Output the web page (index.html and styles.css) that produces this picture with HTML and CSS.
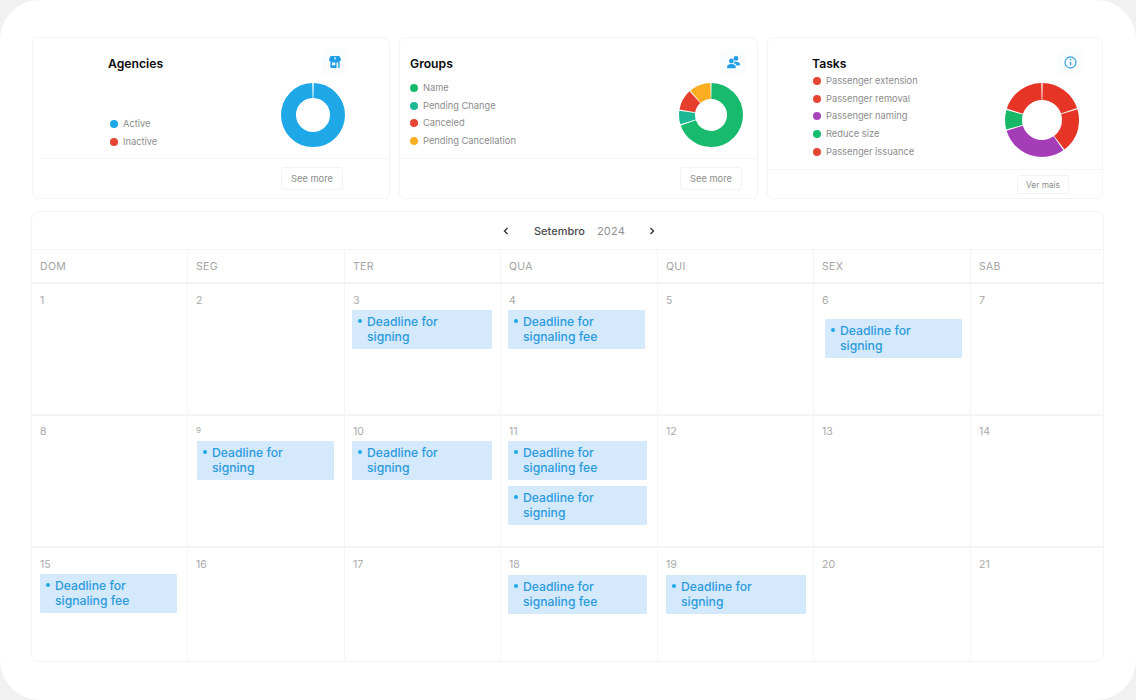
FILE: index.html
```html
<!DOCTYPE html>
<html lang="pt">
<head>
<meta charset="utf-8">
<title>Dashboard</title>
<link rel="stylesheet" href="styles.css">
</head>
<body>
<main class="panel">
  <section class="cards">
    <article class="card card-agencies">
      <div class="card-main">
        <div class="info">
          <h2 class="title">Agencies</h2>
          <ul class="legend">
            <li class="legend-item"><span class="dot blue"></span>Active</li>
            <li class="legend-item"><span class="dot red"></span>Inactive</li>
          </ul>
        </div>
        <div class="visual">
          <span class="icon-tile">
            <svg class="icon" width="12" height="12" viewBox="0 0 12 12"><path fill-rule="evenodd" d="M1.6 0h8.8L12 3.6c0 1-.7 1.7-1.4 1.7v5.7c0 .6-.4 1-1 1H2.4c-.6 0-1-.4-1-1V5.3C.7 5.3 0 4.6 0 3.6zM3 6.4v2.8h3.2V6.4zM7.6 6.4V12h1.6V6.4zM5.4 1v2.6h1.2V1z"/></svg>
          </span>
          <svg class="donut" width="64" height="64" viewBox="0 0 64 64">
            <circle class="seg" cx="32" cy="32" r="24.5" pathLength="100" stroke="#1ea8e8" stroke-width="15" stroke-dasharray="99.2 100" stroke-dashoffset="-0.4"/>
          </svg>
        </div>
      </div>
      <footer class="card-foot"><button class="more">See more</button></footer>
    </article>

    <article class="card card-groups">
      <div class="card-main">
        <div class="info">
          <h2 class="title">Groups</h2>
          <ul class="legend">
            <li class="legend-item"><span class="dot green"></span>Name</li>
            <li class="legend-item"><span class="dot teal"></span>Pending Change</li>
            <li class="legend-item"><span class="dot red"></span>Canceled</li>
            <li class="legend-item"><span class="dot amber"></span>Pending Cancellation</li>
          </ul>
        </div>
        <div class="visual">
          <span class="icon-tile">
            <svg class="icon" width="13" height="13" viewBox="0 0 13 13"><circle cx="9" cy="2.4" r="2.4"/><circle cx="4.4" cy="5" r="2.4"/><path d="M0 11.2c0-2 1.8-3.2 4.4-3.2s4.4 1.2 4.4 3.2c0 .7-.4 1-1 1H1c-.6 0-1-.3-1-1z"/><path d="M7.2 5.4c.6.3 1.2.4 1.8.4 2.3 0 4 1 4 2.8 0 .6-.3.9-.9.9H9.6C9 8.3 8 7.5 6.8 7.2c.2-.5.4-1.2.4-1.8z"/></svg>
          </span>
          <svg class="donut" width="64" height="64" viewBox="0 0 64 64">
            <circle class="seg" cx="32" cy="32" r="24" pathLength="100" stroke="#18bb6e" stroke-width="16" stroke-dasharray="69.4 100" stroke-dashoffset="-0.3"/>
            <circle class="seg" cx="32" cy="32" r="24" pathLength="100" stroke="#1db996" stroke-width="16" stroke-dasharray="6.9 100" stroke-dashoffset="-70.3"/>
            <circle class="seg" cx="32" cy="32" r="24" pathLength="100" stroke="#e63f2e" stroke-width="16" stroke-dasharray="10.5 100" stroke-dashoffset="-77.8"/>
            <circle class="seg" cx="32" cy="32" r="24" pathLength="100" stroke="#fbad22" stroke-width="16" stroke-dasharray="10.8 100" stroke-dashoffset="-88.9"/>
          </svg>
        </div>
      </div>
      <footer class="card-foot"><button class="more">See more</button></footer>
    </article>

    <article class="card card-tasks">
      <div class="card-main">
        <div class="info">
          <h2 class="title">Tasks</h2>
          <ul class="legend">
            <li class="legend-item"><span class="dot red"></span>Passenger extension</li>
            <li class="legend-item"><span class="dot red"></span>Passenger removal</li>
            <li class="legend-item"><span class="dot purple"></span>Passenger naming</li>
            <li class="legend-item"><span class="dot green"></span>Reduce size</li>
            <li class="legend-item"><span class="dot red"></span>Passenger issuance</li>
          </ul>
        </div>
        <div class="visual">
          <span class="icon-tile">
            <svg class="icon icon-info" width="13" height="13" viewBox="0 0 13 13"><circle cx="6.5" cy="6.5" r="5.5" fill="none" stroke-width="1.3"/><path d="M6.5 5.8v3.6" fill="none" stroke-width="1.6"/><circle class="info-dot" cx="6.5" cy="3.7" r="0.9"/></svg>
          </span>
          <svg class="donut" width="74" height="74" viewBox="0 0 74 74">
            <circle class="seg" cx="37" cy="37" r="28.5" pathLength="100" stroke="#e63427" stroke-width="17" stroke-dasharray="19.4 100" stroke-dashoffset="-0.3"/>
            <circle class="seg" cx="37" cy="37" r="28.5" pathLength="100" stroke="#e63427" stroke-width="17" stroke-dasharray="19.3 100" stroke-dashoffset="-20.3"/>
            <circle class="seg" cx="37" cy="37" r="28.5" pathLength="100" stroke="#a63db8" stroke-width="17" stroke-dasharray="30.1 100" stroke-dashoffset="-40.2"/>
            <circle class="seg" cx="37" cy="37" r="28.5" pathLength="100" stroke="#17b866" stroke-width="17" stroke-dasharray="8.5 100" stroke-dashoffset="-70.9"/>
            <circle class="seg" cx="37" cy="37" r="28.5" pathLength="100" stroke="#e63427" stroke-width="17" stroke-dasharray="19.7 100" stroke-dashoffset="-80"/>
          </svg>
        </div>
      </div>
      <footer class="card-foot"><button class="more">Ver mais</button></footer>
    </article>
  </section>

  <section class="calendar">
    <header class="cal-head">
      <svg class="chev" width="6" height="8" viewBox="0 0 6 8"><path d="M4.5 1 1.5 4l3 3"/></svg>
      <span class="month">Setembro</span>
      <span class="year">2024</span>
      <svg class="chev" width="6" height="8" viewBox="0 0 6 8"><path d="M1.5 1l3 3-3 3"/></svg>
    </header>
    <div class="cal-grid">
      <div class="wd">DOM</div><div class="wd">SEG</div><div class="wd">TER</div><div class="wd">QUA</div><div class="wd">QUI</div><div class="wd">SEX</div><div class="wd">SAB</div>

      <div class="day"><span class="num">1</span></div>
      <div class="day"><span class="num">2</span></div>
      <div class="day"><span class="num">3</span><div class="ev">Deadline for signing</div></div>
      <div class="day"><span class="num">4</span><div class="ev ev-short">Deadline for signaling fee</div></div>
      <div class="day"><span class="num">5</span></div>
      <div class="day"><span class="num">6</span><div class="ev ev-short ev-low">Deadline for signing</div></div>
      <div class="day"><span class="num">7</span></div>

      <div class="day"><span class="num">8</span></div>
      <div class="day"><span class="num num-small">9</span><div class="ev ev-short ev-in">Deadline for signing</div></div>
      <div class="day"><span class="num">10</span><div class="ev">Deadline for signing</div></div>
      <div class="day"><span class="num">11</span><div class="ev ev-mid">Deadline for signaling fee</div><div class="ev ev-mid">Deadline for signing</div></div>
      <div class="day"><span class="num">12</span></div>
      <div class="day"><span class="num">13</span></div>
      <div class="day"><span class="num">14</span></div>

      <div class="day day-last"><span class="num">15</span><div class="ev ev-short ev-first">Deadline for signaling fee</div></div>
      <div class="day day-last"><span class="num">16</span></div>
      <div class="day day-last"><span class="num">17</span></div>
      <div class="day day-last"><span class="num">18</span><div class="ev ev-mid ev-drop">Deadline for signaling fee</div></div>
      <div class="day day-last"><span class="num">19</span><div class="ev ev-first ev-drop">Deadline for signing</div></div>
      <div class="day day-last"><span class="num">20</span></div>
      <div class="day day-last"><span class="num">21</span></div>
    </div>
  </section>
</main>
</body>
</html>
```

FILE: styles.css
```css
* { box-sizing: border-box; }

html, body {
  margin: 0;
  height: 100%;
}

body {
  background: #f1f1f1;
  font-family: Inter, "Liberation Sans", sans-serif;
  overflow: hidden;
}

.panel {
  width: 1136px;
  height: 700px;
  background: #fff;
  border-radius: 40px;
  padding: 37px 32px 0 31px;
}

/* Summary cards */
.cards {
  display: grid;
  grid-template-columns: 358px 359px 336px;
  column-gap: 9px;
  height: 162px;
  margin-left: 1px;
  margin-bottom: 12px;
}

.card {
  display: flex;
  flex-direction: column;
  border: 1px solid #f4f4f5;
  border-radius: 6px;
  background: #fff;
}

.card-main {
  flex: 1;
  display: flex;
  justify-content: space-between;
  padding-top: 11px;
}

.info { padding-top: 7px; }

.title {
  margin: 0;
  font-size: 12.2px;
  line-height: 16px;
  font-weight: 600;
  color: #0a0a0a;
}

.legend {
  list-style: none;
  margin: 0;
  padding: 0;
  display: flex;
  flex-direction: column;
  row-gap: 5.7px;
}

.legend-item {
  display: flex;
  align-items: center;
  column-gap: 5px;
  font-size: 9.3px;
  line-height: 12px;
  color: #8c8c8c;
}

.dot {
  width: 8px;
  height: 8px;
  border-radius: 50%;
  flex: none;
}

.blue { background: #1ea8e8; }
.red { background: #e64534; }
.green { background: #18bb6e; }
.teal { background: #1db996; }
.amber { background: #fbad22; }
.purple { background: #a845bb; }

.visual {
  display: flex;
  flex-direction: column;
  align-items: flex-end;
  row-gap: 8px;
}

.icon-tile {
  width: 26px;
  height: 26px;
  display: flex;
  align-items: center;
  justify-content: center;
  border-radius: 6px;
  background: #fbfcfd;
}

.icon { fill: #1f9fe6; }

.icon-info { stroke: #45a9e6; }
.info-dot { fill: #45a9e6; stroke: none; }

.seg {
  fill: none;
  transform: rotate(-90deg);
  transform-origin: center;
}

.card-foot {
  display: flex;
  justify-content: flex-end;
  border-top: 1px solid #f6f6f6;
  padding-top: 8px;
}

.more {
  height: 23px;
  width: 62px;
  padding: 0;
  border: 1px solid #f3f3f4;
  border-radius: 3px;
  background: #fff;
  font-family: inherit;
  font-size: 9.3px;
  color: #8c8c8c;
}

.card-agencies .info { padding-left: 75px; }
.card-agencies .legend { margin: 46px 0 0 2px; }
.card-agencies .visual { padding-right: 41px; }
.card-agencies .donut { margin-right: 3px; }
.card-agencies .card-foot { margin-left: 7px; height: 40px; padding-right: 46px; }

.card-groups .info { padding-left: 10px; }
.card-groups .legend { margin-top: 10px; }
.card-groups .visual { padding-right: 11px; }
.card-groups .donut { margin-right: 3px; }
.card-groups .card-foot { height: 40px; padding-right: 15px; }

.card-tasks .info { padding-left: 44px; }
.card-tasks .legend { margin: 3px 0 0 1px; }
.card-tasks .visual { padding-right: 19px; }
.card-tasks .donut { margin-right: 4px; }
.card-tasks .card-foot { height: 29px; padding-top: 5px; padding-right: 33px; }
.card-tasks .more { width: 52px; height: 19px; font-size: 8.3px; }

/* Calendar */
.calendar {
  height: 451px;
  border: 1px solid #f4f4f5;
  border-radius: 8px;
  overflow: hidden;
}

.cal-head {
  height: 37px;
  display: flex;
  align-items: center;
  padding-left: 471px;
  font-size: 11px;
  font-weight: 500;
}

.month { margin-left: 25px; color: #4a4a4a; }
.year { margin: 0 24px 0 12px; color: #8f8f8f; font-weight: 400; letter-spacing: .2px; }

.chev {
  fill: none;
  stroke: #333;
  stroke-width: 1.4;
}

.cal-grid {
  display: grid;
  grid-template-columns: 156px 157px 156px 157px 156px 157px 133px;
  grid-template-rows: 35px 132px 132px 114px;
}

.wd {
  display: flex;
  align-items: center;
  padding-left: 8px;
  font-size: 10.5px;
  letter-spacing: .3px;
  color: #a3a3a3;
  border-top: 1px solid #f4f4f4;
  border-right: 1px solid #f4f4f4;
  border-bottom: 2px solid #f2f2f2;
}

.wd:nth-child(7) { border-right: 0; }

.day {
  padding: 11px 0 0 8px;
  border-right: 1px solid #f5f5f5;
  border-bottom: 2px solid #f4f4f4;
}

.day:nth-child(n+15):nth-child(-n+21) { padding-top: 10px; }

.day:nth-child(7n) { border-right: 0; }
.day-last { border-bottom: 0; }

.num {
  display: block;
  height: 12px;
  font-size: 10.5px;
  line-height: 12px;
  color: #a8a8a8;
}

.num-small {
  font-size: 8px;
  line-height: 8px;
}

.ev {
  position: relative;
  width: 140px;
  height: 39px;
  margin: 3px 0 6px -1px;
  padding: 4px 20px 0 15px;
  border-radius: 1px;
  background: #d5e9fd;
  font-size: 12.2px;
  line-height: 15px;
  font-weight: 500;
  color: #2a9bdb;
}

.ev::before {
  content: "";
  position: absolute;
  left: 6px;
  top: 9px;
  width: 4px;
  height: 4px;
  border-radius: 50%;
  background: #1ea8e8;
}

.ev-short { width: 137px; }
.ev-mid { width: 139px; }
.ev-first { margin-left: 0; }
.ev-in { margin-left: 1px; }
.ev-low { margin: 12px 0 0 3px; }
.ev-drop { margin-top: 4px; }
```
